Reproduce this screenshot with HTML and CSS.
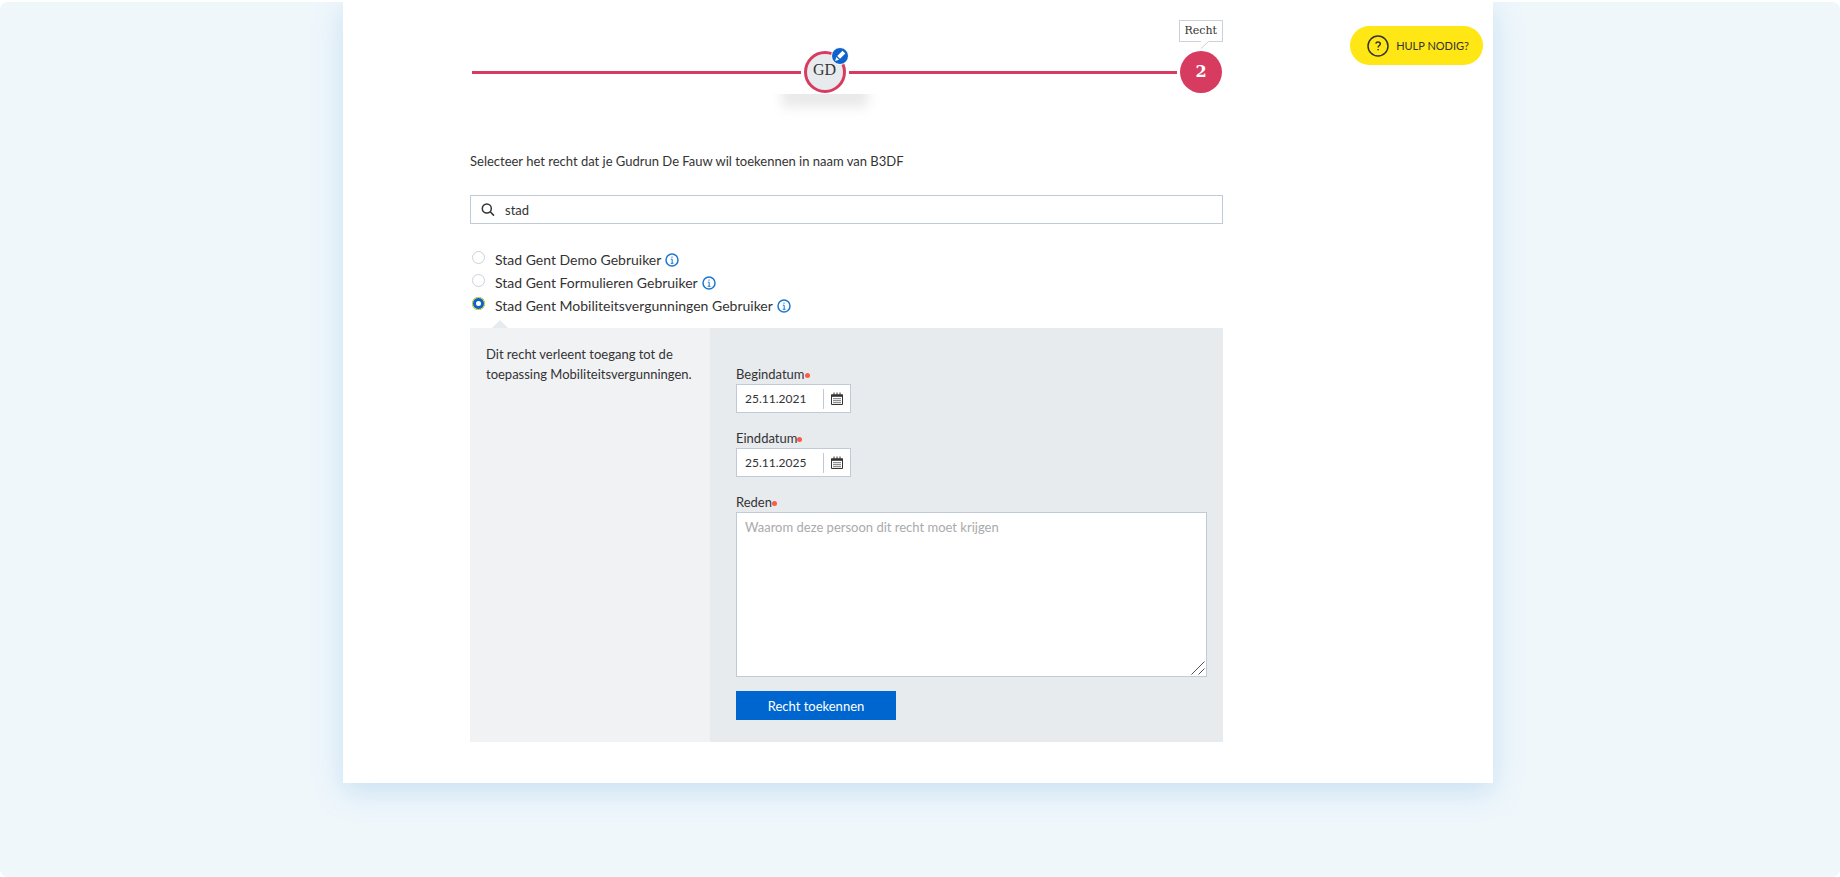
FILE: index.html
```
<!DOCTYPE html>
<html lang="nl">
<head>
<meta charset="utf-8">
<title>Recht toekennen</title>
<link rel="stylesheet" href="styles.css">
</head>
<body>
<div class="page">
  <main class="card">
    <button class="help" type="button">
      <svg class="help-icon" viewBox="0 0 22 22" aria-hidden="true"><circle cx="11" cy="11" r="10"/><path d="M8.8 8.6c.2-1.1 1.1-1.7 2.2-1.7 1.300 0 2.300.8 2.300 2 0 1.500-2.200 1.700-2.200 3.500"/><path d="M11.100 13.900v1.400"/></svg>
      <span>HULP NODIG?</span>
    </button>

    <div class="content">
      <div class="stepper">
        <span class="step-line"></span>
        <div class="step">
          <div class="avatar">GD</div>
          <button class="edit" type="button" aria-label="Persoon wijzigen">
            <svg viewBox="0 0 18 18" aria-hidden="true"><circle cx="9" cy="9" r="8.500"/><path d="M11.500 3.700l2.800 2.800-5.300 5.300-2.800-2.800zM5.300 9.900l2.800 2.800-4 1.200z"/></svg>
          </button>
          <span class="step-shade"></span>
        </div>
        <span class="step-line"></span>
        <div class="step">
          <div class="step-number">2</div>
          <div class="step-label">Recht<svg class="step-tail" viewBox="0 0 9 8" aria-hidden="true"><path class="tail-fill" d="M1 0h8L1 7z"/><path class="tail-edge" d="M8 1L1 7.500"/></svg></div>
        </div>
      </div>

      <form class="rights">
        <p class="intro">Selecteer het recht dat je Gudrun De Fauw wil toekennen in naam van B3DF</p>

        <div class="search">
          <svg viewBox="0 0 14 14" aria-hidden="true"><circle cx="5.800" cy="5.500" r="4.500"/><path d="M9.200 8.800l3.800 3.800"/></svg>
          <input type="text" value="stad" aria-label="Zoek een recht">
        </div>

        <div class="options">
          <div class="option"><input type="radio" name="recht" id="r1"><label for="r1">Stad Gent Demo Gebruiker</label><button class="info" type="button" aria-label="Info"><svg viewBox="0 0 14 14" aria-hidden="true"><circle cx="7" cy="7" r="6"/><path d="M7 3.500v1.300M5.800 6.200h1.400v4M5.700 10.300h2.800"/></svg></button></div>
          <div class="option"><input type="radio" name="recht" id="r2"><label for="r2">Stad Gent Formulieren Gebruiker</label><button class="info" type="button" aria-label="Info"><svg viewBox="0 0 14 14" aria-hidden="true"><circle cx="7" cy="7" r="6"/><path d="M7 3.500v1.300M5.800 6.200h1.400v4M5.700 10.300h2.800"/></svg></button></div>
          <div class="option"><input type="radio" name="recht" id="r3" checked><label for="r3">Stad Gent Mobiliteitsvergunningen Gebruiker</label><button class="info" type="button" aria-label="Info"><svg viewBox="0 0 14 14" aria-hidden="true"><circle cx="7" cy="7" r="6"/><path d="M7 3.500v1.300M5.800 6.200h1.400v4M5.700 10.300h2.800"/></svg></button></div>
        </div>

        <section class="panel">
          <p class="description">Dit recht verleent toegang tot de toepassing Mobiliteitsvergunningen.</p>
          <div class="fields">
            <div class="field">
              <label for="begin">Begindatum<span class="required"></span></label>
              <div class="date">
                <input type="text" id="begin" value="25.11.2021">
                <button type="button" aria-label="Kies begindatum"><svg viewBox="0 0 14 14" aria-hidden="true"><path class="cal-body" d="M1.500 3h11v9.500h-11z"/><path class="cal-head" d="M1 2.500h12v2.300H1z"/><path class="cal-ring" d="M4 .5v2.500M7 .5v2.500M10 .5v2.500"/><path class="cal-grid" d="M3 6.700h8M3 8.700h8M3 10.700h8"/></svg></button>
              </div>
            </div>
            <div class="field">
              <label for="eind">Einddatum<span class="required"></span></label>
              <div class="date">
                <input type="text" id="eind" value="25.11.2025">
                <button type="button" aria-label="Kies einddatum"><svg viewBox="0 0 14 14" aria-hidden="true"><path class="cal-body" d="M1.500 3h11v9.500h-11z"/><path class="cal-head" d="M1 2.500h12v2.300H1z"/><path class="cal-ring" d="M4 .5v2.500M7 .5v2.500M10 .5v2.500"/><path class="cal-grid" d="M3 6.700h8M3 8.700h8M3 10.700h8"/></svg></button>
              </div>
            </div>
            <div class="field">
              <label for="reden">Reden<span class="required"></span></label>
              <div class="reason">
                <textarea id="reden" placeholder="Waarom deze persoon dit recht moet krijgen"></textarea>
                <svg class="grip" viewBox="0 0 14 14" aria-hidden="true"><path d="M.5 13.500l13-13M7.500 13.500l6-6"/></svg>
              </div>
            </div>
            <button class="submit" type="submit">Recht toekennen</button>
          </div>
        </section>
      </form>
    </div>
  </main>
</div>
</body>
</html>
```
FILE: styles.css
```
* {
  box-sizing: border-box;
}

body {
  margin: 0;
  padding-top: 2px;
  background: #fff;
  color: #333;
  font: 13px/20px Lato, "Open Sans", sans-serif;
}

p {
  margin: 0;
}

button,
input,
textarea {
  margin: 0;
  padding: 0;
  border: 0;
  background: none;
  color: inherit;
  font: inherit;
}

button {
  cursor: pointer;
}

svg {
  display: block;
  fill: none;
}

.page {
  min-height: calc(100vh - 2px);
  padding: 0 4px 80px 0;
  border-radius: 8px;
  background: #eff7fb;
  overflow: hidden;
}

.card {
  position: relative;
  max-width: 1150px;
  margin: 0 auto;
  padding: 18px 270px 41px 127px;
  background: #fff;
  box-shadow: 0 8px 28px rgba(110, 170, 225, 0.3);
}

.help {
  position: absolute;
  top: 24px;
  right: 10px;
  display: flex;
  align-items: center;
  gap: 7px;
  height: 39px;
  padding: 0 14px 0 17px;
  border-radius: 20px;
  background: #ffe615;
  font-size: 11px;
}

.help-icon {
  width: 22px;
  height: 22px;
  stroke: #333332;
  stroke-width: 1.500;
}

.stepper {
  display: flex;
  align-items: center;
  gap: 3px;
  padding: 31px 1px 58px 2px;
}

.step-line {
  flex: 1;
  height: 3px;
  background: #d73b5f;
}

.step {
  position: relative;
}

.avatar,
.step-number {
  display: flex;
  align-items: center;
  justify-content: center;
  width: 42px;
  height: 42px;
  border-radius: 50%;
  font-family: "DejaVu Serif", serif;
}

.avatar {
  padding-bottom: 4px;
  border: 3px solid #d73b5f;
  background: #e8ebee;
  font-family: "Liberation Serif", serif;
  font-size: 16px;
}

.step-number {
  background: #d73b5f;
  color: #fff;
  font-size: 16px;
  font-weight: bold;
}

.edit {
  position: absolute;
  top: -4px;
  right: -3px;
  width: 18px;
  height: 18px;
}

.edit circle {
  fill: #0f62cc;
  stroke: #fff;
}

.edit path {
  fill: #fff;
}

.step-shade {
  position: absolute;
  top: 43px;
  left: 50%;
  width: 110px;
  height: 28px;
  margin-left: -55px;
  overflow: hidden;
}

.step-shade::before {
  content: "";
  position: absolute;
  top: -12px;
  left: 12px;
  right: 12px;
  height: 25px;
  background: #e9e9e9;
  filter: blur(6px);
}

.step-label {
  position: absolute;
  right: -1px;
  bottom: 51px;
  padding: 0 5px;
  border: 1px solid #cbd2da;
  background: #fff;
  font: 11px/20px "DejaVu Serif", serif;
}

.step-tail {
  position: absolute;
  top: 20px;
  left: 20px;
  width: 9px;
  height: 8px;
}

.tail-fill {
  fill: #fff;
}

.tail-edge {
  stroke: #cbd2da;
}

.search {
  display: flex;
  align-items: center;
  gap: 10px;
  height: 29px;
  margin: 24px 0;
  padding: 0 10px;
  border: 1px solid #c1cbd8;
}

.search svg {
  width: 14px;
  height: 14px;
  stroke: #333;
  stroke-width: 1.500;
}

.search input {
  flex: 1;
  min-width: 0;
  outline: 0;
}

.options {
  padding: 0 0 11px 2px;
}

.option {
  display: flex;
  align-items: center;
  gap: 4px;
  height: 23px;
  font-size: 14px;
}

.option input {
  appearance: none;
  width: 13px;
  height: 13px;
  margin: 0 6px 4px 0;
  border: 1px solid #cbd2da;
  border-radius: 50%;
}

.option input:checked {
  border: 4px solid #0f62cc;
  outline: 1px solid #ffe615;
  outline-offset: -1px;
}

.info svg {
  width: 14px;
  height: 14px;
  stroke: #1a76d2;
  stroke-width: 1.500;
}

.info path {
  stroke-width: 1;
}

.panel {
  position: relative;
  display: grid;
  grid-template-columns: 240px 1fr;
  background: #e8ebee;
}

.panel::before {
  content: "";
  position: absolute;
  top: -8px;
  left: 22px;
  border: 8px solid transparent;
  border-top: 0;
  border-bottom-color: #e8ebee;
}

.description {
  padding: 16px;
  background: #f1f2f4;
}

.fields {
  padding: 36px 16px 22px 26px;
}

.field {
  margin-bottom: 15px;
}

.field:last-of-type {
  margin-bottom: 14px;
}

.field label {
  display: flex;
  align-items: center;
  height: 20px;
}

.required {
  width: 5px;
  height: 5px;
  margin-top: 2px;
  border-radius: 50%;
  background: #ff5a44;
}

.date {
  display: flex;
  align-items: center;
  width: 115px;
  height: 29px;
  border: 1px solid #c1cbd8;
  background: #fff;
}

.date input {
  flex: 1;
  min-width: 0;
  height: 20px;
  padding-left: 8px;
  border-right: 1px solid #c1cbd8;
  font-size: 12px;
}

.date button {
  padding: 0 6px;
}

.date svg {
  width: 14px;
  height: 14px;
}

.cal-body,
.cal-ring {
  stroke: #333;
}

.cal-head {
  fill: #333;
}

.cal-grid {
  stroke: #777;
}

.reason {
  position: relative;
}

.reason textarea {
  display: block;
  width: 100%;
  height: 165px;
  padding: 4px 8px;
  border: 1px solid #c1cbd8;
  background: #fff;
  resize: none;
}

.reason textarea::placeholder {
  color: #aaa;
}

.grip {
  position: absolute;
  right: 2px;
  bottom: 2px;
  width: 14px;
  height: 14px;
  pointer-events: none;
  stroke: #555;
}

.submit {
  display: block;
  width: 160px;
  height: 29px;
  background: #0066cf;
  color: #fff;
}
```
